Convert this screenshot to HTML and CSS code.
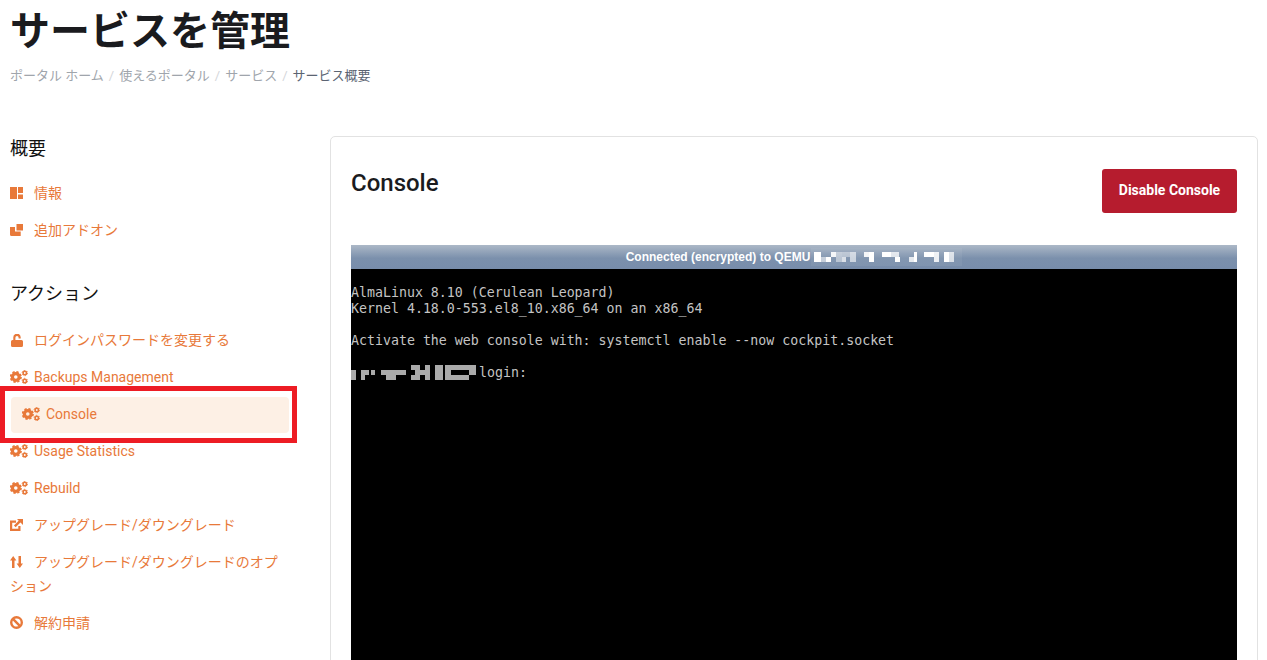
FILE: index.html
```html
<!DOCTYPE html>
<html lang="ja">
<head>
<meta charset="utf-8">
<title>サービスを管理</title>
<link rel="stylesheet" href="styles.css">
</head>
<body>
<svg class="defs" aria-hidden="true">
  <symbol id="i-dash" viewBox="0 0 13 12"><path d="M0 0h7v12H0zM8 0h5v6H8zM8 7.500h5V12H8z"/></symbol>
  <symbol id="i-addon" viewBox="0 0 13 12"><path d="M6.500 0H13v6.500H6.500zM0 3h5v4.500h5.700V12H1.500Q0 12 0 10.500z"/></symbol>
  <symbol id="i-lock" viewBox="0 0 12 13"><path d="M1.500 6H2.300V3.700A3.700 3.700 0 0 1 9.700 3.200V4.500H7.600V3.700A1.600 1.600 0 0 0 4.400 3.700V6H10.500Q12 6 12 7.500V11.500Q12 13 10.500 13H1.500Q0 13 0 11.500V7.500Q0 6 1.500 6z"/></symbol>
  <symbol id="i-cogs" viewBox="0 0 18 14">
    <circle cx="5.800" cy="7" r="3.400" fill="none" stroke="currentColor" stroke-width="3.200"/>
    <circle cx="5.800" cy="7" r="5.200" fill="none" stroke="currentColor" stroke-width="1.700" stroke-dasharray="2.300 1.780"/>
    <circle cx="14.800" cy="3" r="1.700" fill="none" stroke="currentColor" stroke-width="1.600"/>
    <circle cx="14.800" cy="3" r="2.700" fill="none" stroke="currentColor" stroke-width=".9" stroke-dasharray="1.400 1.430"/>
    <circle cx="14.800" cy="11" r="1.700" fill="none" stroke="currentColor" stroke-width="1.600"/>
    <circle cx="14.800" cy="11" r="2.700" fill="none" stroke="currentColor" stroke-width=".9" stroke-dasharray="1.400 1.430"/>
  </symbol>
  <symbol id="i-ext" viewBox="0 0 13 12">
    <path d="M6 2.600H1.100V10.900H9.400V7" fill="none" stroke="currentColor" stroke-width="2.200"/>
    <path d="M4.800 7.400L10 2.200" fill="none" stroke="currentColor" stroke-width="2.400"/>
    <path d="M7 0H13V6z"/>
  </symbol>
  <symbol id="i-sort" viewBox="0 0 13 12"><path d="M3.200 0L6.400 4.500H4.500V12H2V4.500H0zM8.500 0H11V7.500H13L9.800 12 6.600 7.500H8.500z"/></symbol>
  <symbol id="i-ban" viewBox="0 0 13 13">
    <circle cx="6.500" cy="6.500" r="5.300" fill="none" stroke="currentColor" stroke-width="2.400"/>
    <path d="M2.700 2.700L10.300 10.300" fill="none" stroke="currentColor" stroke-width="2.400"/>
  </symbol>
</svg>

<header class="page-head">
  <h1 class="page-title">サービスを管理</h1>
  <nav class="crumbs">
    <a class="crumb">ポータル ホーム</a><span class="sep">/</span><a class="crumb">使えるポータル</a><span class="sep">/</span><a class="crumb">サービス</a><span class="sep">/</span><span class="crumb-current">サービス概要</span>
  </nav>
</header>

<div class="layout">
  <aside class="sidebar">
    <section class="side-group">
      <h2 class="side-title">概要</h2>
      <ul class="side-list">
        <li class="side-item"><span class="ico"><svg class="ic ic-12"><use href="#i-dash"/></svg></span>情報</li>
        <li class="side-item"><span class="ico"><svg class="ic ic-12"><use href="#i-addon"/></svg></span>追加アドオン</li>
      </ul>
    </section>
    <section class="side-group">
      <h2 class="side-title">アクション</h2>
      <ul class="side-list">
        <li class="side-item"><span class="ico"><svg class="ic ic-lock"><use href="#i-lock"/></svg></span>ログインパスワードを変更する</li>
        <li class="side-item"><span class="ico"><svg class="ic ic-cog"><use href="#i-cogs"/></svg></span>Backups Management</li>
        <li class="side-item side-item-active"><span class="ico"><svg class="ic ic-cog"><use href="#i-cogs"/></svg></span>Console<span class="callout"></span></li>
        <li class="side-item"><span class="ico"><svg class="ic ic-cog"><use href="#i-cogs"/></svg></span>Usage Statistics</li>
        <li class="side-item"><span class="ico"><svg class="ic ic-cog"><use href="#i-cogs"/></svg></span>Rebuild</li>
        <li class="side-item"><span class="ico"><svg class="ic ic-12"><use href="#i-ext"/></svg></span>アップグレード/ダウングレード</li>
        <li class="side-item"><span class="ico"><svg class="ic ic-12"><use href="#i-sort"/></svg></span>アップグレード/ダウングレードのオプション</li>
        <li class="side-item"><span class="ico"><svg class="ic ic-ban"><use href="#i-ban"/></svg></span>解約申請</li>
      </ul>
    </section>
  </aside>

  <main class="card">
    <div class="card-head">
      <h2 class="card-title">Console</h2>
      <button class="btn-danger" type="button">Disable Console</button>
    </div>
    <div class="vnc">
      <div class="vnc-bar">
        <span>Connected (encrypted) to QEMU</span>
        <svg class="mosaic-bar" width="151" height="18" viewBox="0 0 151 18">
          <rect width="151" height="18" fill="#fff" opacity=".06"/>
          <g fill="#fff">
            <rect x="3" y="4" width="7" height="10"/>
            <rect x="10" y="9" width="5" height="5" opacity=".55"/>
            <rect x="15" y="9" width="5" height="5"/>
            <rect x="20" y="4" width="5" height="5" opacity=".9"/>
            <rect x="25" y="4" width="6" height="10" opacity=".45"/>
            <rect x="31" y="4" width="8" height="5" opacity=".4"/>
            <rect x="31" y="9" width="4" height="5" opacity=".7"/>
            <rect x="39" y="4" width="6" height="10" opacity=".6"/>
            <rect x="53" y="4" width="5" height="5" opacity=".9"/>
            <rect x="58" y="4" width="5" height="10"/>
            <rect x="71" y="4" width="9" height="5"/>
            <rect x="80" y="4" width="8" height="5" opacity=".75"/>
            <rect x="84" y="9" width="5" height="5"/>
            <rect x="98" y="9" width="5" height="5" opacity=".8"/>
            <rect x="103" y="4" width="3" height="10"/>
            <rect x="113" y="4" width="10" height="5"/>
            <rect x="123" y="4" width="5" height="10" opacity=".85"/>
            <rect x="133" y="4" width="5" height="10"/>
            <rect x="138" y="4" width="5" height="10" opacity=".7"/>
          </g>
        </svg>
      </div>
      <pre class="vnc-screen">AlmaLinux 8.10 (Cerulean Leopard)
Kernel 4.18.0-553.el8_10.x86_64 on an x86_64

Activate the web console with: systemctl enable --now cockpit.socket

<svg class="mosaic-host" width="128" height="16" viewBox="0 0 128 16"><path fill="#aaa" d="M0 5h5v10H0zM10 5h4v10h-4zM14 5h4v5h-4zM20 5h4v5h-4zM30 5h25v5H45v5H35v-5h-5zM60 0h9v5h5V0h5v15h-5v-5h-5v5h-9v-5h4V5h-4zM84 0h8v15h-8zM94 0h6v15h-6zM100 0h25v5H100zM100 10h18v5H100zM118 5h7v5h-7z"/></svg>login:</pre>
    </div>
  </main>
</div>
</body>
</html>
```

FILE: styles.css
```css
* { box-sizing: border-box; }
html, body { height: 660px; overflow: hidden; }
body {
  margin: 0;
  padding: 0 9px 0 10px;
  background: #fff;
  color: #1a1a1a;
  font-family: Roboto, "Noto Sans CJK JP", sans-serif;
  font-size: 14px;
}
.defs { display: none; }

.page-head { height: 136px; padding-top: 8px; }
.page-title {
  margin: 0;
  font-size: 40px;
  line-height: 48px;
  font-weight: 700;
  color: #1a1b1e;
}
.crumbs {
  margin-top: 9px;
  font-size: 13px;
  line-height: 21px;
  color: #a0a5ac;
  white-space: nowrap;
}
.sep { color: #d4d6da; padding: 0 5px; }
.crumb-current { color: #5b6472; }

.layout { display: grid; grid-template-columns: 320px 928px; }

.sidebar { padding-top: 1px; }
.side-group + .side-group { margin-top: 34px; }
.side-title {
  margin: 0 0 13px;
  font-size: 18px;
  line-height: 24px;
  font-weight: 400;
  color: #111;
}
.side-group + .side-group .side-title { margin-bottom: 15px; }
.side-list { list-style: none; margin: 0; padding: 0; width: 279px; }
.side-item {
  position: relative;
  padding: 6.5px 0;
  line-height: 24px;
  color: #e8793a;
}
.side-item-active {
  margin: 2px 0 -1px 1px;
  padding: 5px 11px 7px;
  width: 278px;
  background: #fdf0e5;
  border-radius: 4px;
}
.ico { display: inline-block; width: 24px; vertical-align: top; }
.ic { display: block; fill: currentColor; margin-top: 6px; }
.ic-12 { width: 13px; height: 12px; }
.ic-ban { width: 13px; height: 13px; margin-top: 5px; }
.ic-lock { width: 12px; height: 13px; margin-left: 1px; }
.ic-cog { width: 18px; height: 14px; margin-top: 5px; }

.callout {
  position: absolute;
  top: -11px;
  bottom: -10px;
  left: -11px;
  right: -8px;
  border: 5px solid #ed1c24;
  pointer-events: none;
}

.card {
  height: 700px;
  padding: 32px 20px 0;
  background: #fff;
  border: 1px solid #e2e2e2;
  border-radius: 5px;
}
.card-head {
  display: flex;
  justify-content: space-between;
  align-items: flex-start;
  height: 76px;
}
.card-title {
  margin: 0;
  font-size: 24px;
  line-height: 29px;
  font-weight: 500;
  color: #1a1b1e;
}
.btn-danger {
  width: 135px;
  height: 44px;
  padding: 0 0 2px;
  border: 0;
  border-radius: 3px;
  background: #b61c2e;
  color: #fff;
  font-family: Roboto, sans-serif;
  font-size: 14px;
  font-weight: 700;
}

.vnc { background: #000; height: 560px; }
.vnc-bar {
  display: flex;
  justify-content: center;
  align-items: center;
  height: 24px;
  background: linear-gradient(#acb8c7, #7b90ac 55%, #788dab);
  color: #fff;
  font-family: "Liberation Sans", Arial, sans-serif;
  font-size: 12px;
  font-weight: 700;
}
.mosaic-bar { margin-left: 1px; }
.vnc-screen {
  margin: 0;
  padding: 16px 0 0;
  font-family: "DejaVu Sans Mono", monospace;
  font-size: 13.28px;
  line-height: 16px;
  color: #c4c4c4;
}
.mosaic-host { vertical-align: top; }
```
